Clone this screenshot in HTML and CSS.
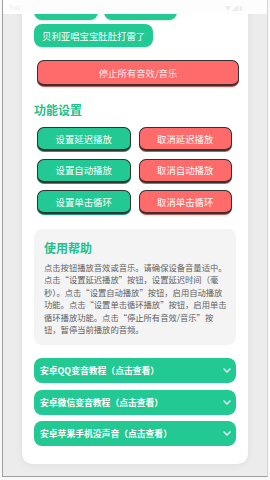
FILE: index.html
```html
<!DOCTYPE html>
<html>
<head>
  <title>音效播放器</title>
  <link rel="stylesheet" href="styles.css">
</head>
<body>
  <div class="device">
    <div class="statusbar">
      <span class="time">9:41</span>
      <span class="icons">▼◢▮</span>
    </div>
    <div class="card">
      <div class="sounds">
        <button class="sound w1"></button>
        <button class="sound w2"></button>
        <button class="sound">贝利亚唱宝宝肚肚打雷了</button>
      </div>

      <button class="btn3d red stop">停止所有音效/音乐</button>

      <h3 class="section-title">功能设置</h3>
      <div class="settings">
        <button class="btn3d green">设置延迟播放</button>
        <button class="btn3d red">取消延迟播放</button>
        <button class="btn3d green">设置自动播放</button>
        <button class="btn3d red">取消自动播放</button>
        <button class="btn3d green">设置单击循环</button>
        <button class="btn3d red">取消单击循环</button>
      </div>

      <div class="help">
        <h3 class="help-title">使用帮助</h3>
        <p>点击按钮播放音效或音乐。请确保设备音量适中。<br>点击“设置延迟播放”按钮，设置延迟时间（毫<br>秒）。点击“设置自动播放”按钮，启用自动播放<br>功能。点击“设置单击循环播放”按钮，启用单击<br>循环播放功能。点击“停止所有音效/音乐”按<br>钮，暂停当前播放的音频。</p>
      </div>

      <div class="faq">
        <div class="faq-item"><span>安卓QQ变音教程（点击查看）</span><svg width="8" height="5" viewBox="0 0 8 5"><path d="M1 1l3 3 3-3" fill="none" stroke="#fff" stroke-width="1.3" stroke-linecap="round" stroke-linejoin="round"/></svg></div>
        <div class="faq-item"><span>安卓微信变音教程（点击查看）</span><svg width="8" height="5" viewBox="0 0 8 5"><path d="M1 1l3 3 3-3" fill="none" stroke="#fff" stroke-width="1.3" stroke-linecap="round" stroke-linejoin="round"/></svg></div>
        <div class="faq-item"><span>安卓苹果手机没声音（点击查看）</span><svg width="8" height="5" viewBox="0 0 8 5"><path d="M1 1l3 3 3-3" fill="none" stroke="#fff" stroke-width="1.3" stroke-linecap="round" stroke-linejoin="round"/></svg></div>
      </div>
    </div>
  </div>
</body>
</html>
```

FILE: styles.css
```css
body {
  margin: 0;
  background-color: #f8f8f8;
  font-family: "Noto Sans CJK SC", sans-serif;
}

.device {
  margin-left: 2px;
  width: 264px;
  height: 476px;
  border-left: 1px solid #a0a0a0;
  border-bottom: 1px solid #a0a0a0;
  border-right: 1px solid #d6d6d6;
  background-color: #ececec;
  overflow: hidden;
}

.statusbar {
  position: relative;
  z-index: 2;
  height: 14px;
  background-color: #fdfdfd;
  display: flex;
  justify-content: space-between;
  align-items: center;
  padding: 0 24px 0 6px;
  font-size: 6px;
  color: #ececec;
}

.icons {
  letter-spacing: 1px;
}

.card {
  margin: -20px 0 0 19px;
  width: 226px;
  box-sizing: border-box;
  padding: 3px 12px 18px;
  background-color: #ffffff;
  border-radius: 10px;
  box-shadow: 0 1px 8px rgba(0, 0, 0, 0.06);
}

button {
  font-family: inherit;
  cursor: pointer;
}

.sounds {
  display: flex;
  flex-wrap: wrap;
  gap: 4px 6px;
}

.sound {
  height: 23px;
  padding: 0 8px;
  border: none;
  border-radius: 8px;
  background-color: #22c993;
  color: #ffffff;
  font-size: 9.4px;
  box-shadow: 0 1px 2px rgba(0, 0, 0, 0.12);
}

.sound.w1 {
  width: 64px;
}

.sound.w2 {
  width: 73px;
}

.btn3d {
  height: 24px;
  box-sizing: border-box;
  border: 1px solid #333333;
  border-bottom-width: 2px;
  border-radius: 7px;
  color: #ffffff;
  font-size: 9.4px;
  padding: 0;
}

.btn3d.green {
  background-color: #22c993;
  box-shadow: 0 1px 0 #1b9e75;
}

.btn3d.red {
  background-color: #ff6b6b;
  box-shadow: 0 1px 0 #e04e4e;
}

.stop {
  display: block;
  margin: 13px 0 0 3px;
  width: 202px;
  height: 26px;
  color: #fdeaea;
}

.section-title {
  margin: 16px 0 9px;
  font-size: 12px;
  line-height: 16px;
  color: #22c08e;
  font-weight: bold;
}

.settings {
  display: grid;
  grid-template-columns: 1fr 1fr;
  gap: 7.5px 8px;
  padding: 0 4px 0 3px;
}

.help {
  margin-top: 15px;
  padding: 11px 10px 10px;
  background-color: #f4f4f4;
  border-radius: 8px;
}

.help-title {
  margin: 0 0 5px;
  font-size: 12px;
  line-height: 16px;
  color: #22c08e;
  font-weight: bold;
}

.help p {
  margin: 0;
  font-size: 8.3px;
  line-height: 12.4px;
  color: #606060;
  white-space: nowrap;
}

.faq {
  margin-top: 13px;
  display: flex;
  flex-direction: column;
  gap: 6.5px;
}

.faq-item {
  height: 25px;
  display: flex;
  align-items: center;
  justify-content: space-between;
  padding: 0 5px 0 6px;
  background-color: #22c993;
  border-radius: 8px;
  color: #ffffff;
  font-size: 8.8px;
  font-weight: bold;
}
```
